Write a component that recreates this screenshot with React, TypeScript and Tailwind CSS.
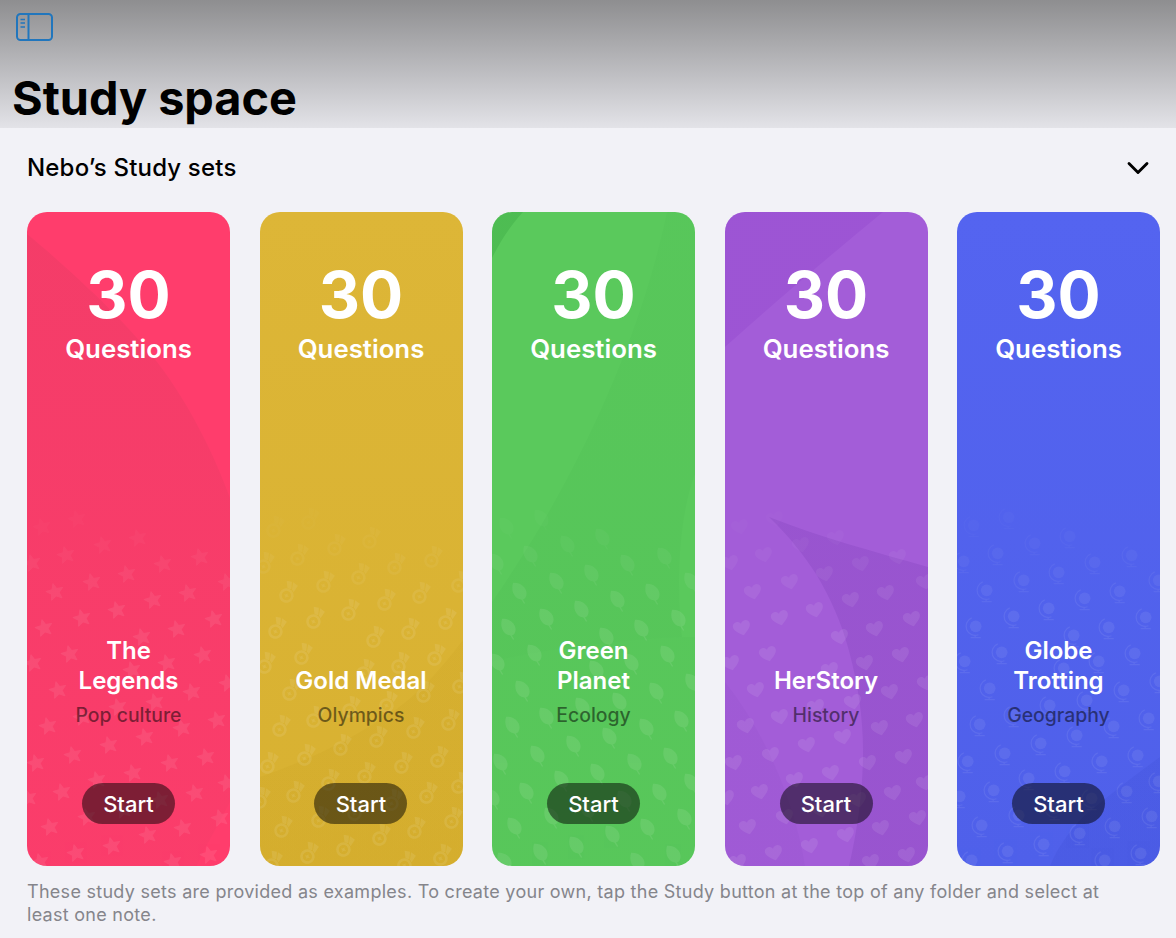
import { ChevronDown } from "lucide-react";

// icon scatter, same for every card (card-relative centre points)
const spots = [
  [50, 307], [15, 315], [76, 333], [111, 326], [39, 343], [173, 345], [136, 352], [5, 351], [100, 362], [65, 370],
  [28, 380], [161, 381], [200, 370], [126, 388], [90, 398], [55, 406], [17, 416], [187, 407], [150, 417], [115, 425],
  [43, 442], [176, 443], [140, 451], [6, 451], [105, 458], [31, 478], [165, 480], [201, 471], [128, 490], [91, 495],
  [55, 505], [21, 514], [190, 508], [155, 516], [118, 525], [82, 533], [46, 543], [9, 551], [179, 545], [143, 551],
  [106, 561], [70, 568], [35, 580], [168, 581], [133, 588], [200, 571], [96, 598], [60, 605], [23, 615], [193, 606],
  [156, 616], [121, 623], [85, 634], [49, 641], [182, 643], [146, 650], [13, 650], [1, 586],
];

type Kind = "star" | "medal" | "leaf" | "heart" | "globe";

function Glyph({ kind }: { kind: Kind }) {
  if (kind === "star") {
    return (
      <path
        d="M0-8.5L2.4-2.9 8.4-2.6 3.8 1.3 5.3 7.2 0 4 -5.3 7.2 -3.8 1.3 -8.4-2.6 -2.4-2.9Z"
        stroke="white"
        strokeWidth="1"
        strokeLinejoin="round"
      />
    );
  }
  if (kind === "heart") {
    return <path d="M0 7C-3 4.5-8 1.5-8-2.5C-8-5-6-6.5-4-6.5C-2.4-6.5-.8-5.6 0-4C.8-5.6 2.4-6.5 4-6.5C6-6.5 8-5 8-2.5C8 1.5 3 4.5 0 7Z" />;
  }
  if (kind === "leaf") {
    return (
      <>
        <path d="M-6-8C1-8.5 7-3 5.5 3C5 5.5 3.5 6.5 2 6.5C-4 6.5-8.5 0-6-8Z" />
        <path d="M1 5L4 10" stroke="white" strokeWidth="1.2" fill="none" />
      </>
    );
  }
  if (kind === "medal") {
    return (
      <>
        <circle cx="0" cy="3" r="4.6" fill="none" stroke="white" strokeWidth="2" />
        <path d="M0 1L.7 2.4 2.2 3 .7 3.6 0 5 -.7 3.6 -2.2 3 -.7 2.4Z" />
        <path d="M-4.5-7.5L-.5-8.5 1.5-3 -1.5-2.5Z" />
        <path d="M.5-8.5L5-7.5 4-1.5 2-3Z" />
      </>
    );
  }
  return (
    <>
      <circle cx="1.5" cy="-1.5" r="5.2" />
      <path d="M-2-9A8 8 0 0 0 4 6" fill="none" stroke="white" strokeWidth="1.1" />
      <path d="M-3 8.5H6M1 6.5V8.5" fill="none" stroke="white" strokeWidth="1.1" />
    </>
  );
}

const placement: Record<Kind, { rotate: number; scale: number }> = {
  star: { rotate: -14, scale: 1 },
  medal: { rotate: 24, scale: 1.3 },
  leaf: { rotate: 0, scale: 1.15 },
  heart: { rotate: -14, scale: 1.08 },
  globe: { rotate: 0, scale: 1.12 },
};

function Pattern({ kind, strength }: { kind: Kind; strength: number }) {
  const { rotate, scale } = placement[kind];
  return (
    <svg className="absolute inset-0 h-full w-full" viewBox="0 0 203 654" fill="white">
      {spots.map(([x, y]) => (
        <g
          key={`${x}-${y}`}
          transform={`translate(${x} ${y}) rotate(${rotate}) scale(${scale})`}
          opacity={strength * Math.min(1, Math.max(0.2, (y - 290) / 110))}
        >
          <Glyph kind={kind} />
        </g>
      ))}
    </svg>
  );
}

type Shape = { d: string; fill: string; opacity: number; fadeTo?: number };

const sets: {
  title: string[];
  topic: string;
  kind: Kind;
  strength: number;
  bg: string;
  shapes: Shape[];
}[] = [
  {
    title: ["The", "Legends"],
    topic: "Pop culture",
    kind: "star",
    strength: 0.075,
    bg: "bg-[#ff3d6c]",
    shapes: [
      {
        d: "M0 22C40 55 100 110 130 150C165 195 190 250 203 286V590C185 625 175 640 170 654H0Z",
        fill: "#a83a50",
        opacity: 0.13,
        fadeTo: 0.05,
      },
    ],
  },
  {
    title: ["Gold Medal"],
    topic: "Olympics",
    kind: "medal",
    strength: 0.085,
    bg: "bg-gradient-to-b from-[#ddb637] to-[#d8b131]",
    shapes: [
      { d: "M203 428C175 465 150 490 124 505C90 528 55 545 0 565V654H203Z", fill: "#b88f10", opacity: 0.1 },
    ],
  },
  {
    title: ["Green", "Planet"],
    topic: "Ecology",
    kind: "leaf",
    strength: 0.085,
    bg: "bg-[#5ac95c]",
    shapes: [
      { d: "M0 0H31C18 14 8 30 0 46Z", fill: "#2f9c3a", opacity: 0.28 },
      {
        d: "M175 0C150 120 90 260 0 390V450C40 440 100 430 190 425C185 380 185 310 203 262V0Z",
        fill: "#2f9c3a",
        opacity: 0.05,
        fadeTo: 0.09,
      },
      { d: "M0 450C40 440 100 430 190 425L203 425V654H0Z", fill: "#2f9c3a", opacity: 0.05 },
    ],
  },
  {
    title: ["HerStory"],
    topic: "History",
    kind: "heart",
    strength: 0.085,
    bg: "bg-[#a35dd8]",
    shapes: [
      { d: "M0 0H158C100 48 50 90 0 135Z", fill: "#8a3cc8", opacity: 0.25 },
      {
        d: "M44 305C65 325 80 345 91 362C105 385 117 412 124 439C133 472 138 505 138 539C138 580 132 620 124 654H203V355C150 340 95 325 44 305Z",
        fill: "#6a2ea8",
        opacity: 0.18,
      },
      { d: "M0 470C40 520 70 590 80 654H0Z", fill: "#6a2ea8", opacity: 0.06 },
    ],
  },
  {
    title: ["Globe", "Trotting"],
    topic: "Geography",
    kind: "globe",
    strength: 0.07,
    bg: "bg-gradient-to-b from-[#5464f0] to-[#4f60ea]",
    shapes: [
      { d: "M203 545C175 565 150 585 126 605C112 620 100 636 93 654H203Z", fill: "#2c3cc0", opacity: 0.12 },
    ],
  },
];

function StudyCard({ set }: { set: (typeof sets)[number] }) {
  return (
    <article className={`relative flex h-[654px] w-[203px] flex-col items-center overflow-hidden rounded-[20px] text-white ${set.bg}`}>
      <svg className="absolute inset-0 h-full w-full" viewBox="0 0 203 654">
        <defs>
          {set.shapes.map((shape, i) => (
            <linearGradient key={i} id={`${set.kind}-fade-${i}`} x1="0" y1="0" x2="0" y2="654" gradientUnits="userSpaceOnUse">
              <stop offset="0" stopColor={shape.fill} stopOpacity={shape.opacity} />
              <stop offset="1" stopColor={shape.fill} stopOpacity={shape.fadeTo ?? shape.opacity} />
            </linearGradient>
          ))}
        </defs>
        {set.shapes.map((shape, i) => (
          <path key={shape.d} d={shape.d} fill={`url(#${set.kind}-fade-${i})`} />
        ))}
      </svg>
      <Pattern kind={set.kind} strength={set.strength} />

      <div className="relative flex flex-1 flex-col items-center pb-[42px] pt-[48px] text-center">
        <p className="text-[64px] font-bold leading-[70px]">30</p>
        <p className="mt-1 text-[25.8px] font-semibold leading-[30px]">Questions</p>

        <div className="mt-auto mb-[7px] text-[24px] font-semibold leading-[30px]">
          {set.title.map((line) => (
            <p key={line} className="whitespace-nowrap">{line}</p>
          ))}
        </div>
        <p className="mb-[56px] text-[19.4px] font-medium leading-6 text-black/50">{set.topic}</p>
        <button className="h-[41px] w-[93px] rounded-full bg-black/50 pt-px text-[22px] font-medium text-white">Start</button>
      </div>
    </article>
  );
}

export default function App() {
  return (
    <div className="h-[938px] overflow-hidden bg-[#f2f2f7] font-[family-name:Inter,sans-serif] text-black">
      <header className="h-[128px] bg-gradient-to-b from-[#8e8e90] to-[#e3e3e8] pl-3 pt-[13px]">
        <button className="ml-1 block text-[#2176bd]" aria-label="Toggle sidebar">
          <svg width="37" height="28" viewBox="0 0 37 28" fill="none" stroke="currentColor" strokeWidth="2">
            <rect x="1" y="1" width="35" height="26" rx="3.5" />
            <path d="M12.5 1V27" />
            <path d="M4.5 6.5H9M4.5 10H9M4.5 14H9" strokeWidth="1.6" />
          </svg>
        </button>
        <h1 className="mt-[29px] text-[46.8px] font-bold leading-[56px]">Study space</h1>
      </header>

      <section className="pl-[27px] pr-[16px] pt-[26px]">
        <div className="mb-[30px] flex h-[28px] items-center justify-between">
          <h2 className="text-[24px] font-medium leading-7 tracking-[0.18px]">Nebo’s Study sets</h2>
          <ChevronDown className="mr-1 h-9 w-9" strokeWidth={1.9} />
        </div>

        <div className="flex justify-between">
          {sets.map((set) => (
            <StudyCard key={set.topic} set={set} />
          ))}
        </div>

        <p className="mt-[14px] pr-[50px] text-[18px] leading-[23px] tracking-[0.28px] text-[#85858b]">
          These study sets are provided as examples. To create your own, tap the Study button at the top of any folder and select at least one note.
        </p>
      </section>
    </div>
  );
}
